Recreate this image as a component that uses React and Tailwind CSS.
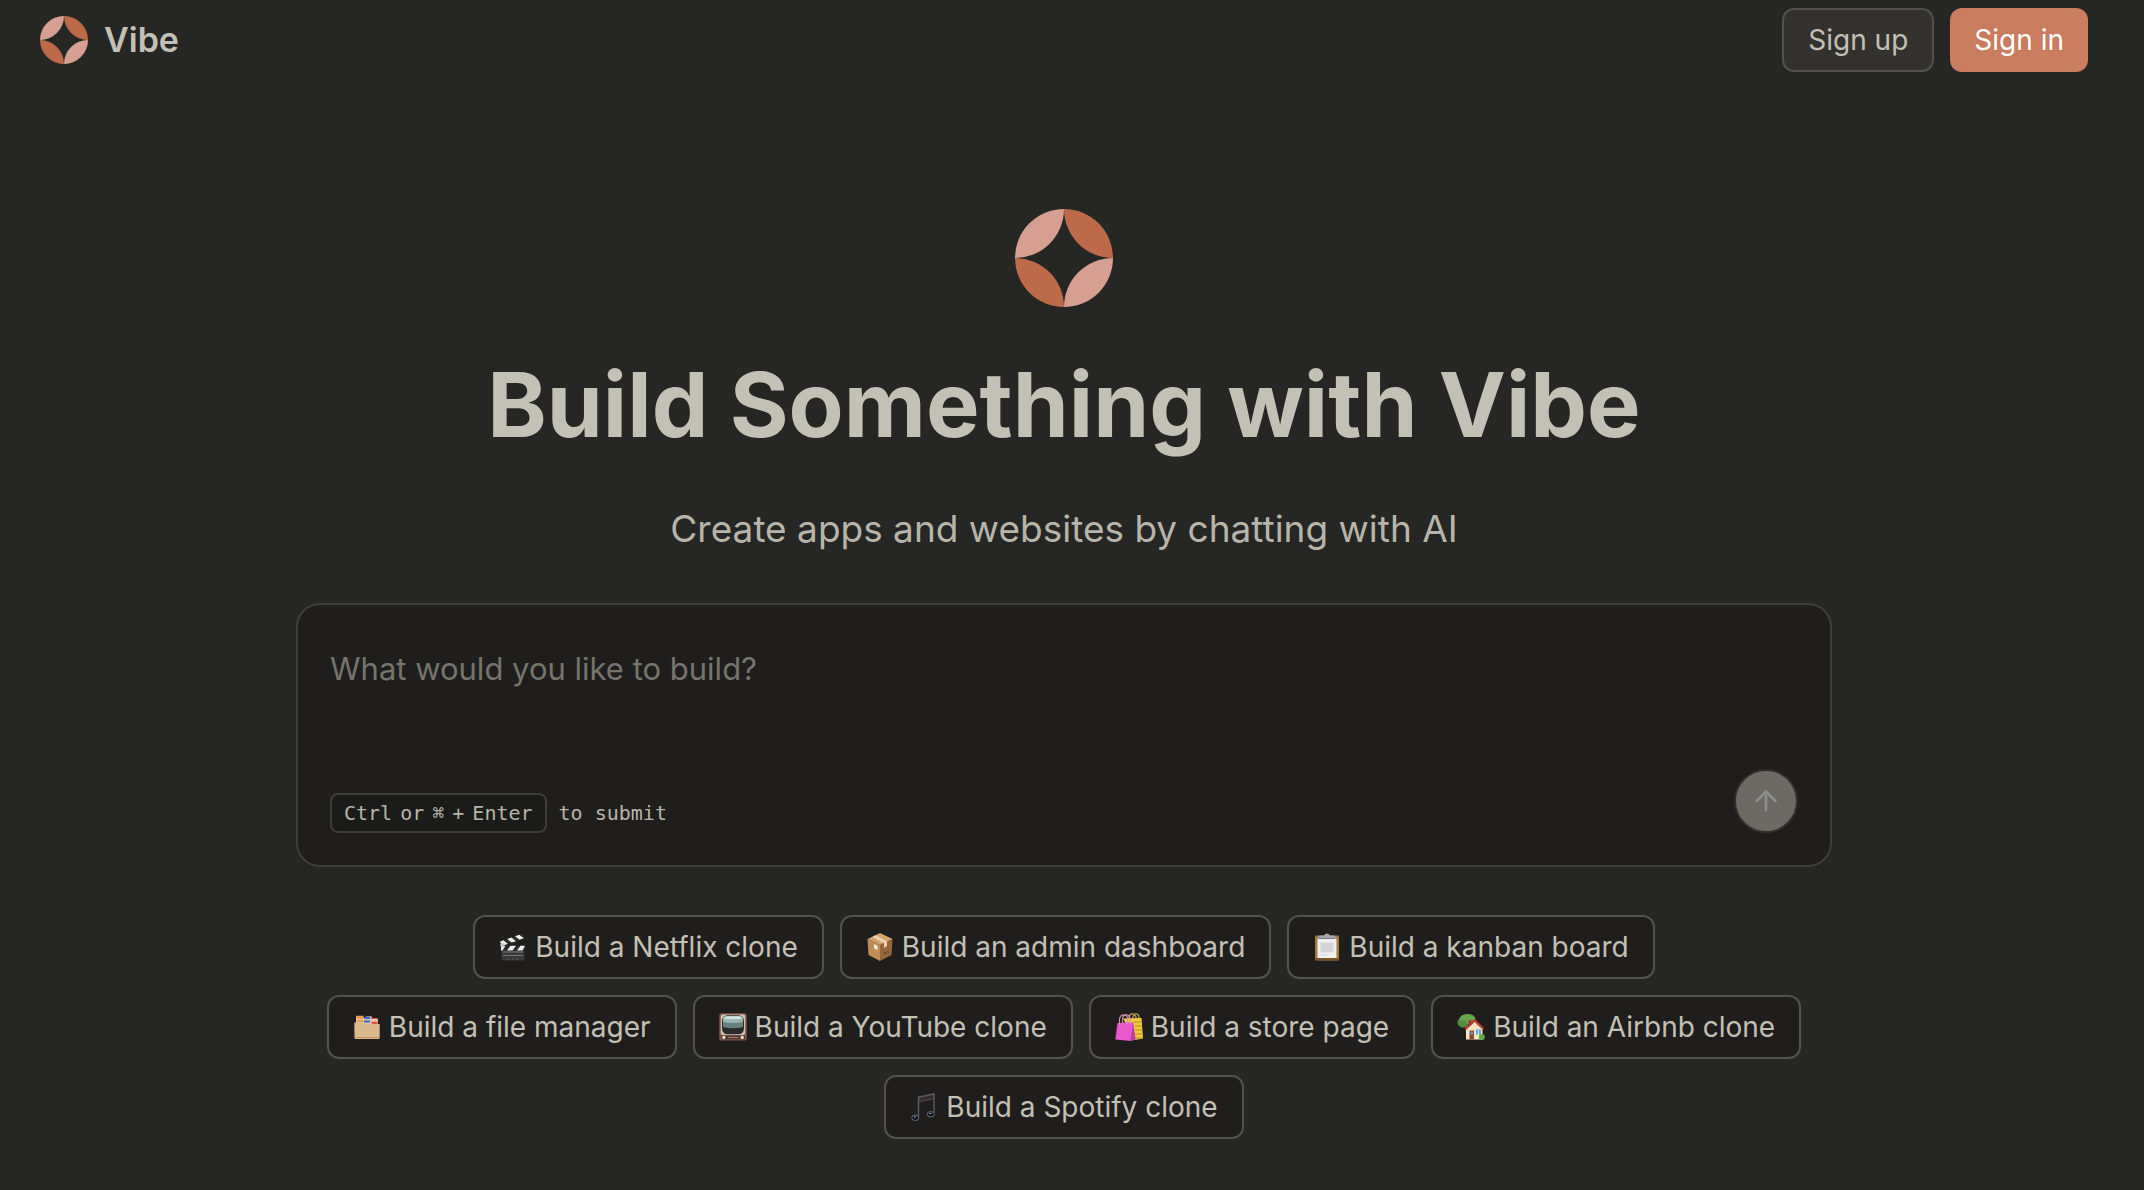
import { ArrowUp } from "lucide-react";

function Logo({ className }) {
  return (
    <svg viewBox="0 0 100 100" className={className} aria-hidden="true">
      <path d="M50 0A50 50 0 0 0 0 50A50 50 0 0 0 50 0Z" fill="#d69f92" />
      <path d="M50 0A50 50 0 0 1 100 50A50 50 0 0 1 50 0Z" fill="#bc6a49" />
      <path d="M0 50A50 50 0 0 1 50 100A50 50 0 0 1 0 50Z" fill="#bc6a49" />
      <path d="M100 50A50 50 0 0 0 50 100A50 50 0 0 0 100 50Z" fill="#d69f92" />
    </svg>
  );
}

function Clapper() {
  return (
    <>
      <path d="M2.500 14h23v12.500a1 1 0 0 1-1 1h-21a1 1 0 0 1-1-1Z" fill="#38383a" />
      <path d="M4 19h20M4 22.500h20" stroke="#77777a" strokeWidth="1" />
      <path d="M9 26h1M13.500 26h1M18 26h1" stroke="#8a8a8d" strokeWidth="1.200" />
      <path d="M.5 8.500 24 .5l1.600 4.500L2 13Z" fill="#2b2b2c" />
      <path d="m1 8.500 3.500-1.200 4.500 3.600-6 1.900ZM8.200 6l4.300-1.500 4.500 3.700-4.200 1.400ZM16 3.300l4.300-1.500 4.500 3.500-4.300 1.400Z" fill="#ececea" />
      <path d="M2 12.800h24v4.700H2Z" fill="#2b2b2c" />
      <path d="M2 12.800h4.500L3.500 17.500H2ZM11.500 12.800H17l-3.500 4.700H8ZM21.500 12.800H26L23.500 17.500H18Z" fill="#ececea" />
      <circle cx="3.200" cy="12" r="2" fill="#c4c4c2" />
    </>
  );
}

function Parcel() {
  return (
    <>
      <path d="M1.500 6 14 12v16L2.500 22Z" fill="#c18c55" />
      <path d="M26.500 6 14 12v16L25.500 22Z" fill="#97663a" />
      <path d="M14 0 26.500 6 14 12 1.500 6Z" fill="#d3a46d" />
      <path d="m9.500 2.300 11.500 6v5l-3 1.500v-4.700L6.500 4Z" fill="#ead3b3" />
      <path d="m8 11 3.500 1.800v4.400L8 15.300Z" fill="#eeeae0" />
      <path d="m17.500 20 1.800-.8v2.600M22 17.800v3.400" stroke="#64401f" strokeWidth="1" fill="none" />
    </>
  );
}

function Clipboard() {
  return (
    <>
      <rect x="2" y="2.500" width="24" height="25" rx="1.200" fill="#a47a41" />
      <path d="M2.500 25h23v2h-23Z" fill="#785326" />
      <path d="M4.500 5.500h19V25h-19Z" fill="#efeff0" />
      <path d="M7.500 9.500h13v10h-13Z" fill="#d4d5d8" />
      <path d="M7 22h7" stroke="#cfd0d3" strokeWidth="1" />
      <path d="M5.500 5.500V3.500q0-1 2-1H11Q12 .4 14 .4t3 2.100h3.500q2 0 2 1v2Z" fill="#a4a8b2" />
      <path d="M6 5.500h16" stroke="#70747f" strokeWidth="1" />
    </>
  );
}

function Folders() {
  return (
    <>
      <path d="M3 10V4q0-1.200 1.200-1.200h6L11 5h2V4.200q0-.9 1-.9h4.500l.7 1.900h4.600q1.200 0 1.200 1.200V12Z" fill="#d9b588" />
      <path d="M4 3h6v3H4Z" fill="#ef9d4b" />
      <path d="M11.500 3.800h5.500v2.400h-5.500Z" fill="#3767e4" />
      <path d="M18.500 5h6v2.400h-6Z" fill="#e44a46" />
      <path d="M3.500 6h21v5h-21Z" fill="#e0c9a6" />
      <path d="M4 7h6v2H4Z" fill="#e99a52" />
      <path d="M11 7.500h6v2h-6Z" fill="#3e5ddd" />
      <path d="M18.500 8.800h6v2h-6Z" fill="#e4403e" />
      <path d="M1.300 9.500h8.500l1.500 1.600h15.400v13.400q0 1.500-1.500 1.500H3q-1.500 0-1.500-1.500Z" fill="#dcb98c" />
      <path d="M1.500 24.500h25" stroke="#bd9769" strokeWidth="1" />
    </>
  );
}

function Television() {
  return (
    <>
      <rect x=".3" y=".3" width="27.400" height="27.200" rx="2.200" fill="#85584d" />
      <rect x="1.800" y="1.500" width="24.400" height="20.500" rx="2" fill="#d0c3b0" />
      <rect x="3" y="2.300" width="22" height="19" rx="5.500" fill="#2a2c2c" />
      <path d="M8 3.200h12q4 0 4 4.300V14q-10 2.500-20 0V7.500Q4 3.200 8 3.200Z" fill="#68807f" />
      <path d="M8 3.200h12q4 0 4 4.300V9Q14 11 4 9V7.500Q4 3.200 8 3.200Z" fill="#9ab5b3" />
      <path d="M8 3.200h12q2.800 0 3.600 2.300-9.600 1.500-19.200 0Q5.200 3.200 8 3.200Z" fill="#cfe5e1" />
      <rect x="2" y="22.800" width="24" height="3.500" fill="#4b3630" />
      <path d="M9 24.500h10" stroke="#ab8476" strokeWidth="1" />
      <circle cx="4.800" cy="24.400" r="1.700" fill="#efe6d2" />
      <circle cx="23.200" cy="24.400" r="1.700" fill="#efe6d2" />
    </>
  );
}

function Bags() {
  return (
    <>
      <path d="M14 6V4q.6-3.300 3.300-3.300T21 4v3M18 6V3.800q.5-3 3-3T24 4v2" stroke="#d1ae57" strokeWidth="1.100" fill="none" />
      <path d="M8 5.500 26.500 5l1.500 20.500-8 1.500Z" fill="#f0cc3c" />
      <path d="M19 9h7.500M20 13h7M20 17h7.300M20 21h7.600M20 25h7.800" stroke="#c99d2d" strokeWidth="1.300" />
      <path d="M2.500 10 18 9l2.500 17.500L15.500 28 .3 26.500Z" fill="#e957cb" />
      <path d="m18 9-2.500 19 5-1.500Z" fill="#bb3ba0" />
      <path d="M4.500 12V6q.8-4 4-4.300T12.500 5v6M7.500 10V5.500q.7-3.500 3.700-3.700T15 5v6" stroke="#cf91af" strokeWidth="1.100" fill="none" />
    </>
  );
}

function House() {
  return (
    <>
      <path d="M8 12h3v8H9Z" fill="#805431" />
      <ellipse cx="6" cy="9.500" rx="5.700" ry="4.800" fill="#4c8738" />
      <ellipse cx="10.500" cy="6" rx="8" ry="5" fill="#65a64a" />
      <circle cx="6" cy="11" r="3.600" fill="#538e3b" />
      <path d="m18 8.500 7.500 7.500v10.500H9V16Z" fill="#f3e4c4" />
      <path d="m17.500 5.500 9.700 9.700-1.300 1.500L17.500 9 9 17l-1.500-1.500Z" fill="#bd3d38" />
      <path d="M11.500 7h3v4l-3 2.500Z" fill="#a43b36" />
      <path d="M12.500 17.500H17v9h-4.500Z" fill="#87492f" />
      <path d="M13.500 18.500H16v3h-2.500Z" fill="#5f9bd0" />
      <path d="M19 16.500h5v5h-5Z" fill="#61a6e1" />
      <path d="M21.500 16.500v5" stroke="#ecf2f5" strokeWidth=".8" />
      <circle cx="24.800" cy="24" r="3" fill="#65a846" />
    </>
  );
}

function Notes() {
  return (
    <>
      <path d="M8.500 24V4L24 .8v19.500" stroke="#565d66" strokeWidth="1.400" fill="none" />
      <path d="M9 4.500 23.700 1.400v4.200L9 8.700Z" fill="#35292d" stroke="#5e595f" strokeWidth=".8" />
      <ellipse cx="5.300" cy="24.800" rx="3.600" ry="2.700" fill="#11151a" stroke="#65707c" strokeWidth="1" />
      <ellipse cx="20.800" cy="21.300" rx="3.600" ry="2.700" fill="#11151a" stroke="#65707c" strokeWidth="1" />
      <path d="M4 24h1.800M19.500 20.500h1.800" stroke="#aebac5" strokeWidth="1" />
    </>
  );
}

const templates = [
  { Icon: Clapper, title: "Build a Netflix clone" },
  { Icon: Parcel, title: "Build an admin dashboard" },
  { Icon: Clipboard, title: "Build a kanban board" },
  { Icon: Folders, title: "Build a file manager" },
  { Icon: Television, title: "Build a YouTube clone" },
  { Icon: Bags, title: "Build a store page" },
  { Icon: House, title: "Build an Airbnb clone" },
  { Icon: Notes, title: "Build a Spotify clone" },
];

export default function App() {
  return (
    <div className="min-h-screen bg-[#262624] pr-4 font-['Inter',sans-serif] text-[#c3c0b6]">
      <header className="flex h-20 items-center justify-between px-10">
        <a href="#" className="flex items-center gap-4">
          <Logo className="size-12" />
          <span className="text-[34px] leading-10 font-semibold">Vibe</span>
        </a>
        <nav className="flex gap-4 text-[28px]">
          <button className="h-16 rounded-xl border-2 border-[#52514a] bg-[#33322e] px-6">Sign up</button>
          <button className="h-16 rounded-xl bg-[#ca7c5e] px-6 text-white">Sign in</button>
        </nav>
      </header>

      <main className="mx-auto flex max-w-[1536px] flex-col items-center pt-[129px]">
        <Logo className="size-[98px]" />
        <h1 className="mt-[50px] text-center text-[90px] leading-24 font-bold">Build Something with Vibe</h1>
        <p className="mt-12 text-center text-[37px] leading-14 text-[#b7b5a9]">
          Create apps and websites by chatting with AI
        </p>

        <form className="mt-[46px] w-full rounded-3xl border-2 border-[#3e3e38] bg-[#1f1e1d] px-8 pt-10 pb-8">
          <textarea
            aria-label="What would you like to build?"
            placeholder="What would you like to build?"
            rows={2}
            className="block h-31 w-full resize-none bg-transparent text-[31px] leading-12 outline-none placeholder:text-[#75746d]"
          />
          <div className="flex items-end justify-between">
            <div className="flex items-center gap-3 font-['DejaVu_Sans_Mono',monospace] text-xl leading-7 text-[#b7b5a9]">
              <kbd className="flex h-10 items-center gap-2 rounded-lg border-2 border-[#3e3e38] bg-[#1b1b19] px-3 font-[inherit]">
                <span>Ctrl</span>
                <span>or</span>
                <span>⌘</span>
                <span>+</span>
                <span>Enter</span>
              </kbd>
              <span>to submit</span>
            </div>
            <button
              type="button"
              aria-label="Submit"
              className="flex size-16 items-center justify-center rounded-full border-2 border-[#31302d] bg-[#6b6a64] text-[#8e8e8f]"
            >
              <ArrowUp size={32} />
            </button>
          </div>
        </form>

        <div className="mt-12 flex max-w-[1500px] flex-wrap justify-center gap-4 pb-12">
          {templates.map(({ Icon, title }) => (
            <button
              key={title}
              className="flex h-16 items-center gap-2 rounded-xl border-2 border-[#52514a] bg-[#1f1e1d] px-6 text-[28px]"
            >
              <svg viewBox="0 0 28 28" className="size-7 shrink-0" aria-hidden="true">
                <Icon />
              </svg>
              {title}
            </button>
          ))}
        </div>
      </main>
    </div>
  );
}
